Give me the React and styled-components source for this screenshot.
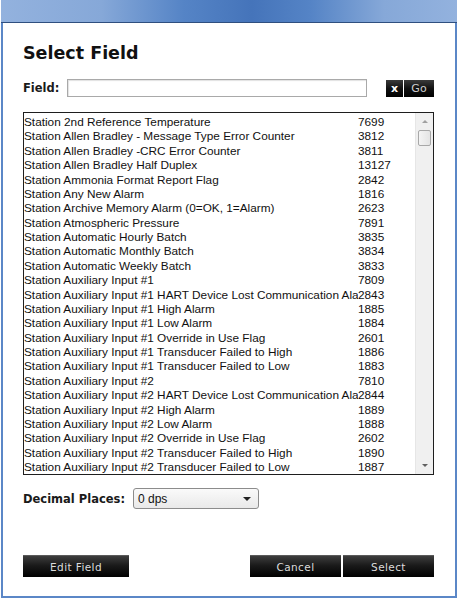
import React from 'react';
import styled, { createGlobalStyle } from 'styled-components';

const GlobalStyle = createGlobalStyle`
  html, body {
    margin: 0;
    padding: 0;
    background: #ffffff;
  }
`;

const Page = styled.div`
  width: 459px;
  height: 600px;
  padding-left: 1px;
  box-sizing: border-box;
`;

const Window = styled.div`
  width: 456px;
  height: 598px;
  display: flex;
  flex-direction: column;
  box-sizing: border-box;
  border: 2px solid #5b87c7;
  border-top: none;
`;

const TitleBar = styled.div`
  height: 22px;
  margin: 0 -2px;
  flex-shrink: 0;
  border-bottom: 1px solid #2f4f7f;
  background: linear-gradient(
    90deg,
    #93b2de 0%,
    #86a8d8 22%,
    #5584c6 40%,
    #4574ba 55%,
    #5584c6 68%,
    #86a8d8 84%,
    #93b2de 100%
  );
`;

const Body = styled.div`
  flex: 1;
  display: flex;
  flex-direction: column;
  padding: 18px 21px 0 20px;
  background: #ffffff;
  font-family: "DejaVu Sans", Verdana, sans-serif;
  color: #111;
`;

const Title = styled.h1`
  margin: 0;
  font-size: 17.5px;
  line-height: 24px;
  font-weight: bold;
  color: #111;
`;

const FieldRow = styled.div`
  display: flex;
  align-items: center;
  justify-content: space-between;
  margin-top: 14px;
  height: 18px;
`;

const Label = styled.label`
  font-size: 11.5px;
  font-weight: bold;
  color: #1a1a1a;
  margin-right: ${(p) => p.$gap || 0}px;
`;

const FieldLeft = styled.div`
  display: flex;
  align-items: center;
`;

const TextInput = styled.input`
  width: 300px;
  height: 18px;
  box-sizing: border-box;
  border: 1px solid #a9a9a9;
  box-shadow: inset 1px 1px 1px rgba(0, 0, 0, 0.12);
  padding: 0 3px;
  font-family: "Liberation Sans", Arial, sans-serif;
  font-size: 12px;
`;

const SmallButtons = styled.div`
  display: flex;
  gap: 1px;
`;

const SmallButton = styled.button`
  height: 17px;
  width: ${(p) => p.$w}px;
  padding: 0;
  border: none;
  background: linear-gradient(180deg, #3a3a3a 0%, #111 50%, #000 100%);
  color: ${(p) => (p.$strong ? '#fff' : '#cfcfcf')};
  font-family: "DejaVu Sans", Verdana, sans-serif;
  font-size: 11px;
  font-weight: ${(p) => (p.$strong ? 'bold' : 'normal')};
  line-height: 17px;
`;

const ListBox = styled.div`
  margin-top: 15px;
  width: 411px;
  height: 363px;
  box-sizing: border-box;
  border: 1px solid #1e1e1e;
  display: flex;
  overflow: hidden;
`;

const Rows = styled.div`
  flex: 1;
  padding-top: 2px;
  font-family: "Liberation Sans", Arial, sans-serif;
  font-size: 11.8px;
  color: #111;
  overflow: hidden;
`;

const Row = styled.div`
  display: flex;
  height: 14.375px;
  line-height: 14.375px;
  white-space: nowrap;
`;

const Name = styled.span`
  width: 334px;
  flex-shrink: 0;
  overflow: hidden;
`;

const Code = styled.span`
  flex: 1;
`;

const Scrollbar = styled.div`
  width: 17px;
  display: flex;
  flex-direction: column;
  align-items: center;
  background: #f0f0f0;
  border-left: 1px solid #e6e6e6;
`;

const Arrow = styled.div`
  height: 17px;
  width: 17px;
  display: flex;
  align-items: center;
  justify-content: center;
  &::after {
    content: '';
    border-left: 3px solid transparent;
    border-right: 3px solid transparent;
    ${(p) => (p.$down ? 'border-top: 3px solid #606060;' : 'border-bottom: 3px solid #a0a0a0;')}
  }
`;

const Thumb = styled.div`
  width: 13px;
  height: 16px;
  box-sizing: border-box;
  border: 1px solid #a8a8a8;
  border-radius: 2px;
  background: linear-gradient(90deg, #f4f4f4 0%, #e4e4e4 100%);
`;

const Track = styled.div`
  flex: 1;
`;

const DecimalRow = styled.div`
  display: flex;
  align-items: center;
  margin-top: 13px;
  height: 21px;
`;

const Select = styled.div`
  width: 126px;
  height: 21px;
  box-sizing: border-box;
  border: 1px solid #8c8c8c;
  border-radius: 3px;
  background: linear-gradient(180deg, #fafafa 0%, #e9e9e9 100%);
  display: flex;
  align-items: center;
  justify-content: space-between;
  padding: 0 7px 0 4px;
  font-family: "Liberation Sans", Arial, sans-serif;
  font-size: 12px;
  color: #111;
  &::after {
    content: '';
    border-left: 4px solid transparent;
    border-right: 4px solid transparent;
    border-top: 4px solid #222;
  }
`;

const Footer = styled.div`
  display: flex;
  justify-content: space-between;
  margin-top: 46px;
  width: 411px;
`;

const ButtonGroup = styled.div`
  display: flex;
  gap: 2px;
`;

const ActionButton = styled.button`
  width: ${(p) => p.$w}px;
  height: 22px;
  padding: 0;
  border: none;
  border-top: 1px solid #5a5a5a;
  background: linear-gradient(180deg, #3d3d3d 0%, #1a1a1a 45%, #000 100%);
  color: #dcdcdc;
  font-family: "DejaVu Sans", Verdana, sans-serif;
  font-size: 10.5px;
  letter-spacing: 0.4px;
`;

const fields = [
  ['Station 2nd Reference Temperature', '7699'],
  ['Station Allen Bradley - Message Type Error Counter', '3812'],
  ['Station Allen Bradley -CRC Error Counter', '3811'],
  ['Station Allen Bradley Half Duplex', '13127'],
  ['Station Ammonia Format Report Flag', '2842'],
  ['Station Any New Alarm', '1816'],
  ['Station Archive Memory Alarm (0=OK, 1=Alarm)', '2623'],
  ['Station Atmospheric Pressure', '7891'],
  ['Station Automatic Hourly Batch', '3835'],
  ['Station Automatic Monthly Batch', '3834'],
  ['Station Automatic Weekly Batch', '3833'],
  ['Station Auxiliary Input #1', '7809'],
  ['Station Auxiliary Input #1 HART Device Lost Communication Alarm', '2843'],
  ['Station Auxiliary Input #1 High Alarm', '1885'],
  ['Station Auxiliary Input #1 Low Alarm', '1884'],
  ['Station Auxiliary Input #1 Override in Use Flag', '2601'],
  ['Station Auxiliary Input #1 Transducer Failed to High', '1886'],
  ['Station Auxiliary Input #1 Transducer Failed to Low', '1883'],
  ['Station Auxiliary Input #2', '7810'],
  ['Station Auxiliary Input #2 HART Device Lost Communication Alarm', '2844'],
  ['Station Auxiliary Input #2 High Alarm', '1889'],
  ['Station Auxiliary Input #2 Low Alarm', '1888'],
  ['Station Auxiliary Input #2 Override in Use Flag', '2602'],
  ['Station Auxiliary Input #2 Transducer Failed to High', '1890'],
  ['Station Auxiliary Input #2 Transducer Failed to Low', '1887'],
];

export default function App() {
  return (
    <Page>
      <GlobalStyle />
      <Window>
        <TitleBar />
        <Body>
          <Title>Select Field</Title>
          <FieldRow>
            <FieldLeft>
              <Label $gap={8}>Field:</Label>
              <TextInput />
            </FieldLeft>
            <SmallButtons>
              <SmallButton $w={17} $strong>x</SmallButton>
              <SmallButton $w={30}>Go</SmallButton>
            </SmallButtons>
          </FieldRow>
          <ListBox>
            <Rows>
              {fields.map(([name, code]) => (
                <Row key={code}>
                  <Name>{name}</Name>
                  <Code>{code}</Code>
                </Row>
              ))}
            </Rows>
            <Scrollbar>
              <Arrow />
              <Thumb />
              <Track />
              <Arrow $down />
            </Scrollbar>
          </ListBox>
          <DecimalRow>
            <Label $gap={8}>Decimal Places:</Label>
            <Select>0 dps</Select>
          </DecimalRow>
          <Footer>
            <ActionButton $w={106}>Edit Field</ActionButton>
            <ButtonGroup>
              <ActionButton $w={91}>Cancel</ActionButton>
              <ActionButton $w={91}>Select</ActionButton>
            </ButtonGroup>
          </Footer>
        </Body>
      </Window>
    </Page>
  );
}
